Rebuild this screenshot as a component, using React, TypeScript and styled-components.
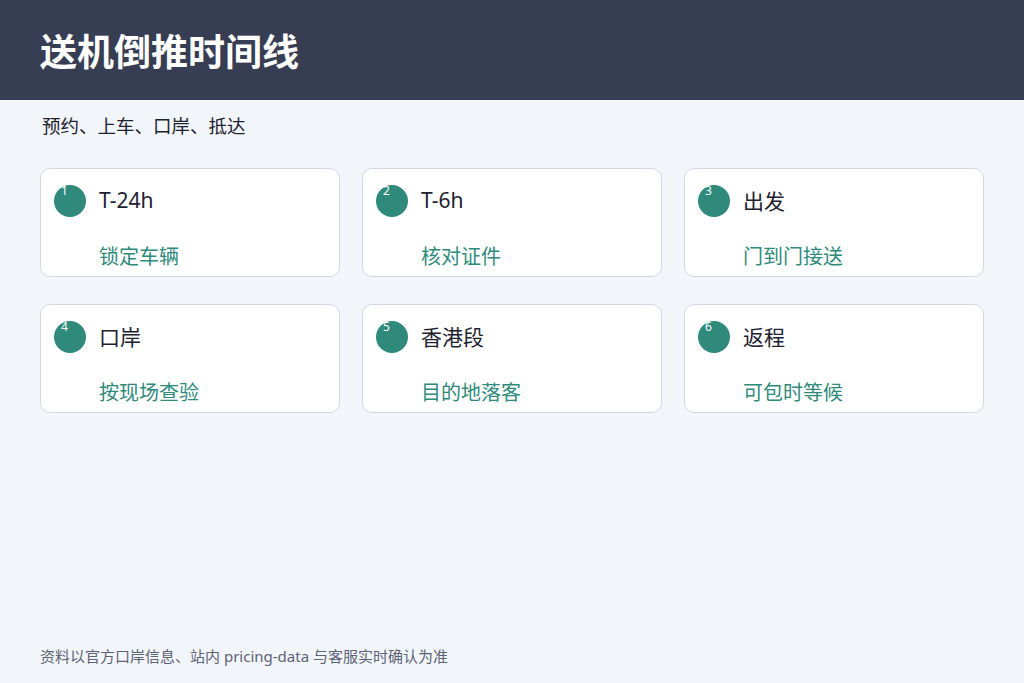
import styled, { createGlobalStyle } from "styled-components";

const Global = createGlobalStyle`
  body { margin: 0; background: #f2f5fa; font-family: "Noto Sans", "Noto Sans CJK SC", sans-serif; }
`;

const steps = [
  { n: 1, title: "T-24h", sub: "锁定车辆" },
  { n: 2, title: "T-6h", sub: "核对证件" },
  { n: 3, title: "出发", sub: "门到门接送" },
  { n: 4, title: "口岸", sub: "按现场查验" },
  { n: 5, title: "香港段", sub: "目的地落客" },
  { n: 6, title: "返程", sub: "可包时等候" },
];

const Page = styled.div`
  width: 1024px;
  height: 683px;
  display: flex;
  flex-direction: column;
  background: #f2f5fa;
`;

const Header = styled.header`
  height: 100px;
  background: #373d52;
  display: flex;
  align-items: center;
  padding: 0 40px;
  box-sizing: border-box;
  h1 {
    margin: 0;
    color: #fff;
    font-size: 37px;
    font-weight: 700;
  }
`;

const Subtitle = styled.p`
  margin: 12px 0 0 42px;
  font-size: 18.5px;
  color: #1e2230;
`;

const Grid = styled.div`
  display: grid;
  grid-template-columns: repeat(3, 300px);
  gap: 27px 22px;
  margin: 30px 0 0 40px;
`;

const Card = styled.div`
  height: 109px;
  box-sizing: border-box;
  background: #fff;
  border: 1px solid #d3d8e3;
  border-radius: 10px;
  padding: 14px 13px;
`;

const Row = styled.div`
  display: flex;
  align-items: center;
  gap: 13px;
`;

const Dot = styled.div`
  width: 32px;
  height: 32px;
  border-radius: 50%;
  background: #2f8a7b;
  color: #fff;
  font-size: 12px;
  line-height: 1;
  padding-left: 7px;
  box-sizing: border-box;
  margin-top: 2px;
`;

const Title = styled.div`
  font-size: 21px;
  color: #1e2230;
`;

const Sub = styled.div`
  margin: 24px 0 0 45px;
  font-size: 20px;
  color: #2f8a7b;
`;

const Footer = styled.footer`
  margin-top: auto;
  padding: 0 0 17px 40px;
  font-size: 15px;
  color: #5d6375;
`;

export default function App() {
  return (
    <Page>
      <Global />
      <Header>
        <h1>送机倒推时间线</h1>
      </Header>
      <Subtitle>预约、上车、口岸、抵达</Subtitle>
      <Grid>
        {steps.map((s) => (
          <Card key={s.n}>
            <Row>
              <Dot>{s.n}</Dot>
              <Title>{s.title}</Title>
            </Row>
            <Sub>{s.sub}</Sub>
          </Card>
        ))}
      </Grid>
      <Footer>资料以官方口岸信息、站内 pricing-data 与客服实时确认为准</Footer>
    </Page>
  );
}
